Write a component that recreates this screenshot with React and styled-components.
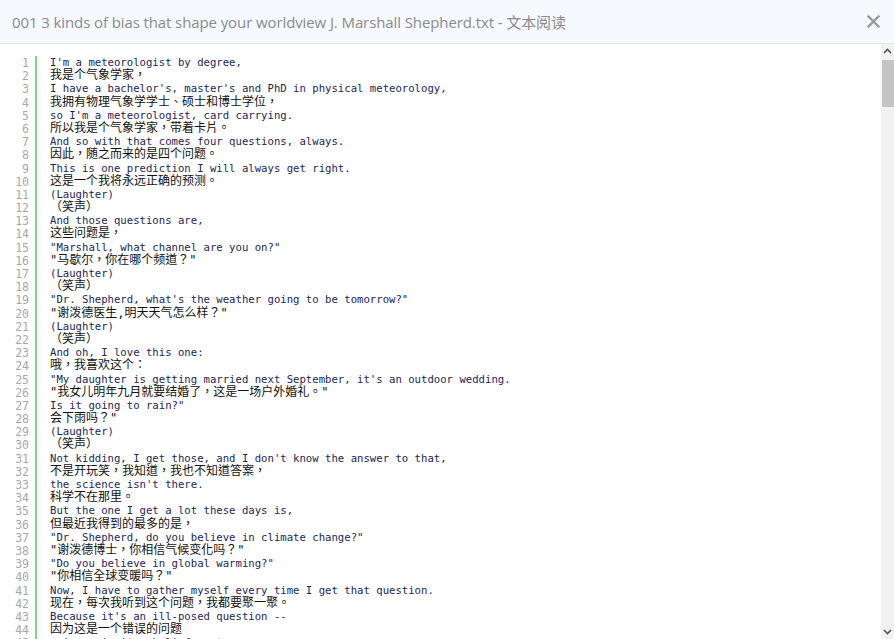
import React from "react";
import styled, { createGlobalStyle } from "styled-components";

const Global = createGlobalStyle`
  html, body { margin: 0; padding: 0; background: #fff; }
  body { width: 894px; height: 639px; overflow: hidden; }
`;

const lines = [
  "I'm a meteorologist by degree,",
  "我是个气象学家，",
  "I have a bachelor's, master's and PhD in physical meteorology,",
  "我拥有物理气象学学士、硕士和博士学位，",
  "so I'm a meteorologist, card carrying.",
  "所以我是个气象学家，带着卡片。",
  "And so with that comes four questions, always.",
  "因此，随之而来的是四个问题。",
  "This is one prediction I will always get right.",
  "这是一个我将永远正确的预测。",
  "(Laughter)",
  "（笑声）",
  "And those questions are,",
  "这些问题是，",
  "\"Marshall, what channel are you on?\"",
  "\"马歇尔，你在哪个频道？\"",
  "(Laughter)",
  "（笑声）",
  "\"Dr. Shepherd, what's the weather going to be tomorrow?\"",
  "\"谢泼德医生,明天天气怎么样？\"",
  "(Laughter)",
  "（笑声）",
  "And oh, I love this one:",
  "哦，我喜欢这个：",
  "\"My daughter is getting married next September, it's an outdoor wedding.",
  "\"我女儿明年九月就要结婚了，这是一场户外婚礼。\"",
  "Is it going to rain?\"",
  "会下雨吗？\"",
  "(Laughter)",
  "（笑声）",
  "Not kidding, I get those, and I don't know the answer to that,",
  "不是开玩笑，我知道，我也不知道答案，",
  "the science isn't there.",
  "科学不在那里。",
  "But the one I get a lot these days is,",
  "但最近我得到的最多的是，",
  "\"Dr. Shepherd, do you believe in climate change?\"",
  "\"谢泼德博士，你相信气候变化吗？\"",
  "\"Do you believe in global warming?\"",
  "\"你相信全球变暖吗？\"",
  "Now, I have to gather myself every time I get that question.",
  "现在，每次我听到这个问题，我都要聚一聚。",
  "Because it's an ill-posed question --",
  "因为这是一个错误的问题",
  "science isn't a belief system.",
  "科学不是一种信仰体系。",
];

const isCJK = (s) => /[\u3000-\u9fff\uff00-\uffef]/.test(s);

const Page = styled.div`
  width: 894px;
  height: 639px;
  display: flex;
  flex-direction: column;
  overflow: hidden;
  background: #fff;
`;

const Header = styled.header`
  height: 43px;
  flex: none;
  display: flex;
  align-items: center;
  justify-content: space-between;
  padding: 0 12px 0 12px;
  background: #f6faff;
  border-bottom: 1px solid #dfe5eb;
`;

const Title = styled.h1`
  margin: 0;
  font: 400 15px "Open Sans", "Noto Sans CJK SC", sans-serif;
  color: #8a8a8a;
  letter-spacing: -0.1px;
`;

const Close = styled.button`
  border: 0;
  background: none;
  padding: 0;
  margin-right: 2px;
  width: 14px;
  height: 14px;
  display: flex;
  align-items: center;
  justify-content: center;
  cursor: pointer;
`;

const Body = styled.div`
  flex: 1;
  display: flex;
  min-height: 0;
`;

const Viewer = styled.div`
  flex: 1;
  overflow: hidden;
  padding-top: 12px;
`;

const Row = styled.div`
  display: flex;
  height: 13.2px;
  line-height: 13.2px;
`;

const Num = styled.div`
  width: 37px;
  box-sizing: border-box;
  flex: none;
  padding-right: 6px;
  text-align: right;
  border-right: 2px solid #7bda7b;
  font: 400 11.5px "DejaVu Sans Mono", "Liberation Mono", monospace;
  color: #a8a8a8;
`;

const Text = styled.div`
  padding-left: 13px;
  white-space: pre;
  font-family: ${(p) =>
    p.$cjk
      ? `"DejaVu Sans Mono", "Noto Sans CJK TC", monospace`
      : `"DejaVu Sans Mono", monospace`};
  font-size: ${(p) => (p.$cjk ? "12px" : "10.63px")};
  color: ${(p) => (p.$cjk ? "#111" : "#1c2656")};
`;

const Scrollbar = styled.div`
  width: 13px;
  flex: none;
  display: flex;
  flex-direction: column;
  background: #f1f1f1;
`;

const Arrow = styled.div`
  height: 14px;
  display: flex;
  align-items: center;
  justify-content: center;
  flex: none;
`;

const Thumb = styled.div`
  height: 47px;
  margin: 2px 0 0 1px;
  background: #c4c4c4;
  flex: none;
`;

const Track = styled.div`
  flex: 1;
`;

export default function App() {
  return (
    <>
      <Global />
      <Page>
        <Header>
          <Title>001 3 kinds of bias that shape your worldview J. Marshall Shepherd.txt - 文本阅读</Title>
          <Close aria-label="close">
            <svg width="13" height="13" viewBox="0 0 13 13">
              <path d="M1.5 1.5 L11.5 11.5 M11.5 1.5 L1.5 11.5" stroke="#9a9a9a" strokeWidth="2.4" strokeLinecap="square" />
            </svg>
          </Close>
        </Header>
        <Body>
          <Viewer>
            {lines.map((l, i) => (
              <Row key={i}>
                <Num>{i + 1}</Num>
                <Text $cjk={isCJK(l)}>{l}</Text>
              </Row>
            ))}
          </Viewer>
          <Scrollbar>
            <Arrow>
              <svg width="9" height="6" viewBox="0 0 9 6">
                <path d="M1 5 L4.5 1.5 L8 5" fill="none" stroke="#505050" strokeWidth="1.6" />
              </svg>
            </Arrow>
            <Thumb />
            <Track />
            <Arrow>
              <svg width="9" height="6" viewBox="0 0 9 6">
                <path d="M1 1 L4.5 4.5 L8 1" fill="none" stroke="#505050" strokeWidth="1.6" />
              </svg>
            </Arrow>
          </Scrollbar>
        </Body>
      </Page>
    </>
  );
}
